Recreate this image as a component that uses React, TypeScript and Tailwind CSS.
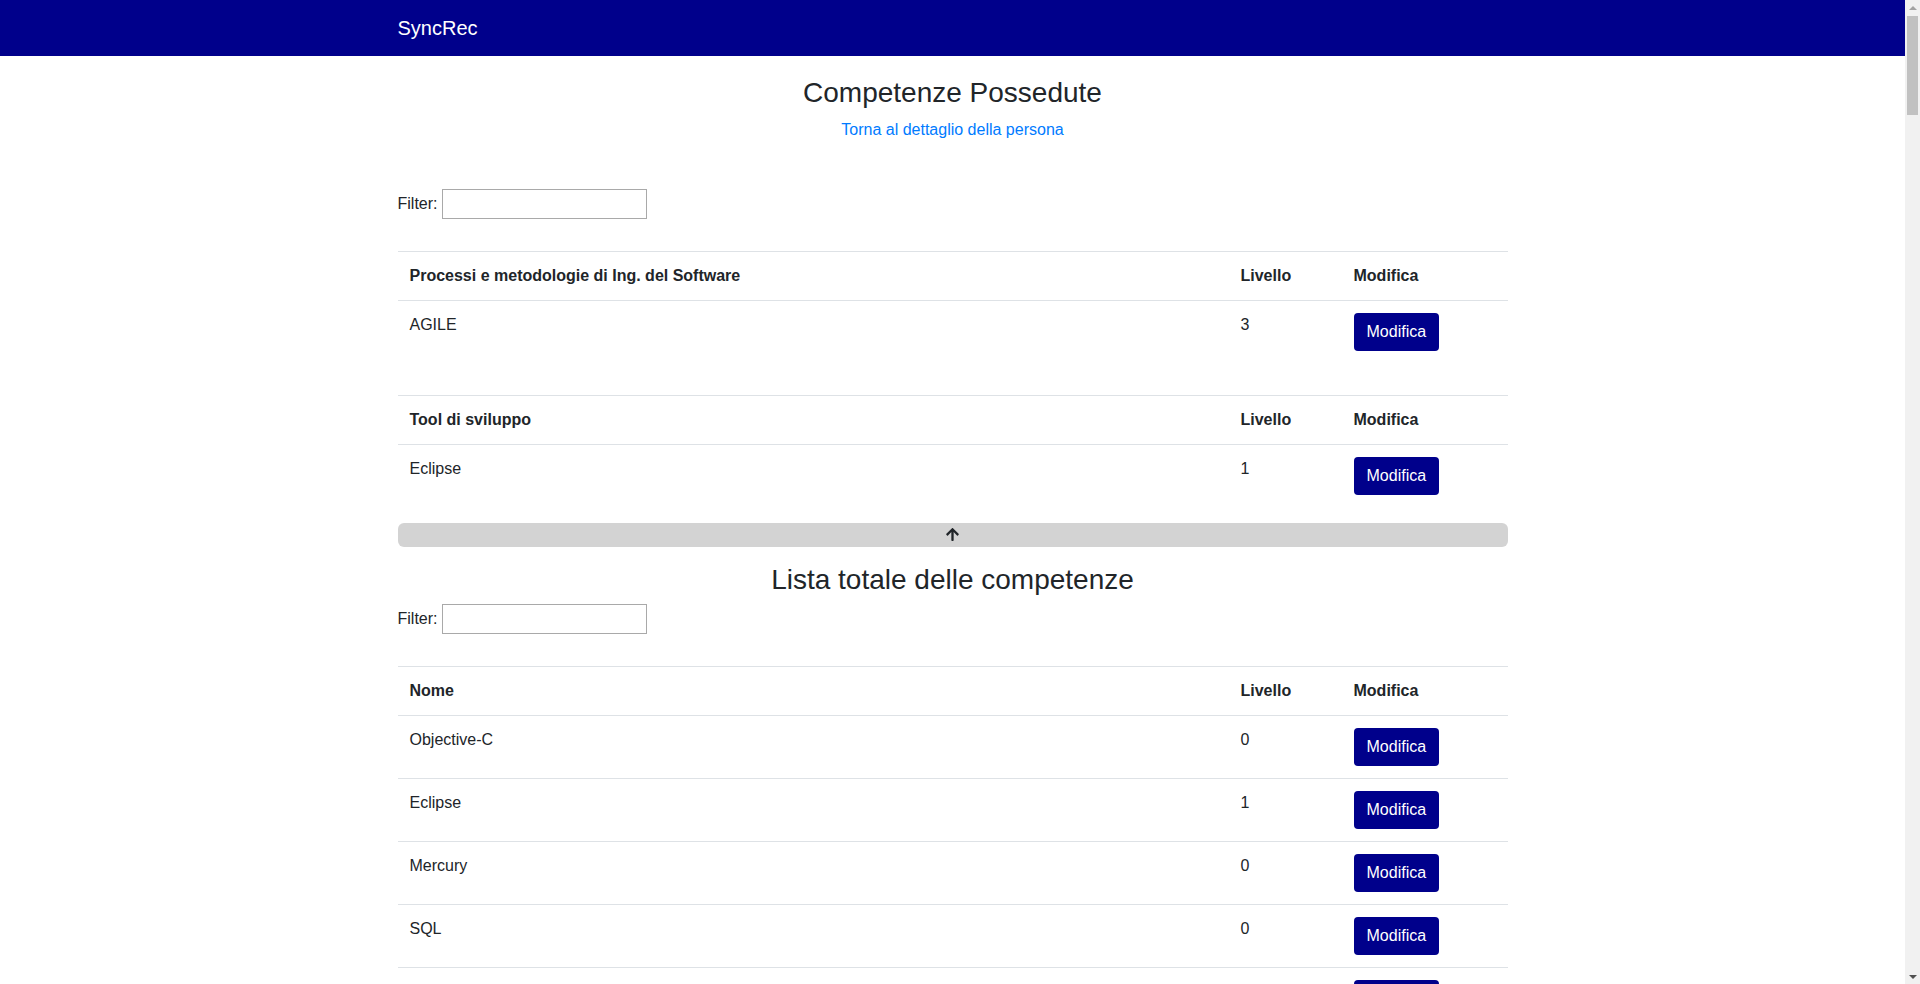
import { useState } from 'react';

const NAVY = '#00008B';

type Skill = { name: string; level: number };

const OWNED: { group: string; skills: Skill[] }[] = [
  { group: 'Processi e metodologie di Ing. del Software', skills: [{ name: 'AGILE', level: 3 }] },
  { group: 'Tool di sviluppo', skills: [{ name: 'Eclipse', level: 1 }] },
];

const BASE = [
  'Objective-C', 'Eclipse', 'Mercury', 'SQL', 'Java', 'JavaScript', 'TypeScript', 'Python', 'C', 'C++',
  'C#', 'PHP', 'Ruby', 'Go', 'Kotlin', 'Swift', 'Scala', 'Perl', 'COBOL', 'Fortran',
  'HTML', 'CSS', 'Angular', 'React', 'Vue.js', 'Node.js', 'Spring', 'Hibernate', 'Maven', 'Gradle',
  'Git', 'SVN', 'Jenkins', 'Docker', 'Kubernetes', 'Linux', 'Windows Server', 'Oracle', 'MySQL', 'PostgreSQL',
  'MongoDB', 'Redis', 'SCRUM', 'Kanban', 'UML', 'JIRA', 'Confluence', 'IntelliJ IDEA', 'Visual Studio', 'NetBeans',
  'AWS', 'Azure', 'Google Cloud', 'REST', 'SOAP', 'XML', 'JSON', 'Bash', 'PowerShell',
];

// lista lunga: la pagina reale scorre parecchio
const ALL: Skill[] = Array.from({ length: 139 }, (_, i) => ({
  name: BASE[i % BASE.length],
  level: BASE[i % BASE.length] === 'Eclipse' ? 1 : 0,
}));

function ArrowUp() {
  return (
    <svg viewBox="0 0 448 512" className="w-[13px] h-[15px]" fill="#212529">
      <path d="M34.9 289.5l-22.2-22.2c-9.4-9.4-9.4-24.6 0-33.9L207 39c9.4-9.4 24.6-9.4 33.9 0l194.3 194.3c9.4 9.4 9.4 24.6 0 33.9L413 289.4c-9.5 9.5-25 9.3-34.3-.4L264 168.6V456c0 13.3-10.7 24-24 24h-32c-13.3 0-24-10.7-24-24V168.6L69.2 289.1c-9.3 9.8-24.8 10-34.3.4z" />
    </svg>
  );
}

// barra di scorrimento come appare nello screenshot (classica, non overlay)
function ScrollTrack() {
  return (
    <div className="w-[15px] shrink-0 h-screen bg-[#f1f1f1] flex flex-col">
      <div className="h-[15px] flex items-center justify-center">
        <svg viewBox="0 0 8 4" className="w-[8px] h-[4px]" fill="#a3a3a3"><path d="M0 4L4 0L8 4Z" /></svg>
      </div>
      <div className="mt-px mx-auto w-[11px] h-[99px] bg-[#c1c1c1]" />
      <div className="flex-1" />
      <div className="h-[15px] flex items-center justify-center">
        <svg viewBox="0 0 8 4" className="w-[8px] h-[4px]" fill="#505050"><path d="M0 0L8 0L4 4Z" /></svg>
      </div>
    </div>
  );
}

function Filter({ value, onChange }: { value: string; onChange: (v: string) => void }) {
  return (
    <div className="flex items-center gap-[4px]">
      <label>Filter:</label>
      <input
        value={value}
        onChange={(e) => onChange(e.target.value)}
        className="w-[205px] h-[30px] border border-[#a9a9a9] bg-white px-1 outline-none"
      />
    </div>
  );
}

function SkillTable({ title, skills, className = '' }: { title: string; skills: Skill[]; className?: string }) {
  return (
    <table className={`w-full table-fixed border-collapse ${className}`}>
      <colgroup>
        <col />
        <col className="w-[113px]" />
        <col className="w-[166px]" />
      </colgroup>
      <thead>
        <tr className="border-t border-[#dee2e6]">
          <th className="text-left font-bold px-3 py-3 leading-6">{title}</th>
          <th className="text-left font-bold px-3 py-3 leading-6">Livello</th>
          <th className="text-left font-bold px-3 py-3 leading-6">Modifica</th>
        </tr>
      </thead>
      <tbody>
        {skills.map((s, i) => (
          <tr key={i} className="border-t border-[#dee2e6]">
            <td className="px-3 py-3 align-top leading-6">{s.name}</td>
            <td className="px-3 py-3 align-top leading-6">{s.level}</td>
            <td className="px-3 py-3 align-top">
              <button className="bg-[#00008B] text-white rounded px-3 py-[6px] leading-6 border border-transparent">
                Modifica
              </button>
            </td>
          </tr>
        ))}
      </tbody>
    </table>
  );
}

export default function App() {
  const [ownedFilter, setOwnedFilter] = useState('');
  const [allFilter, setAllFilter] = useState('');

  const owned = OWNED.map((g) => ({
    ...g,
    skills: g.skills.filter((s) => s.name.toLowerCase().includes(ownedFilter.toLowerCase())),
  }));
  const all = ALL.filter((s) => s.name.toLowerCase().includes(allFilter.toLowerCase()));

  return (
    <div className="flex h-screen overflow-hidden bg-white text-[#212529] text-base font-['Liberation_Sans',Arial,sans-serif]">
      <div className="flex-1 min-w-0 overflow-y-auto [scrollbar-width:none]">
        <nav className="py-2" style={{ backgroundColor: NAVY }}>
          <div className="max-w-[1140px] mx-auto px-[15px]">
            <span className="text-white text-[20px] leading-[30px] py-[5px] inline-block">SyncRec</span>
          </div>
        </nav>

        <div className="max-w-[1140px] mx-auto px-[15px]">
          <h3 className="text-center text-[28px] leading-[1.2] font-normal mt-5 mb-2">Competenze Possedute</h3>
          <div className="text-center leading-6">
            <a href="#" className="text-[#007bff]">Torna al dettaglio della persona</a>
          </div>

          <div className="mt-[47px]">
            <Filter value={ownedFilter} onChange={setOwnedFilter} />
          </div>

          <div className="mt-[32px]">
            {owned.map((g, i) => (
              <SkillTable
                key={g.group}
                title={g.group}
                skills={g.skills}
                className={i < owned.length - 1 ? 'mb-[32px]' : 'mb-4'}
              />
            ))}
          </div>

          <button className="w-full h-6 bg-[#d3d3d3] rounded-md flex items-center justify-center">
            <ArrowUp />
          </button>

          <h3 className="text-center text-[28px] leading-[1.2] font-normal mt-4 mb-2">Lista totale delle competenze</h3>
          <Filter value={allFilter} onChange={setAllFilter} />

          <div className="mt-[32px]">
            <SkillTable title="Nome" skills={all} className="mb-4" />
          </div>
        </div>
      </div>
      <ScrollTrack />
    </div>
  );
}
